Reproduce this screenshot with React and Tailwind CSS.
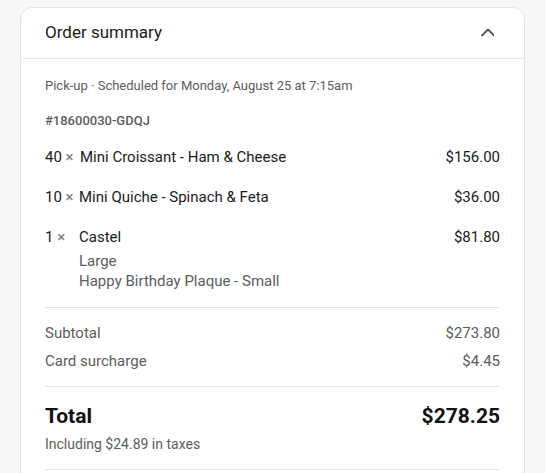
export default function App() {
  const gray = "text-[#5c5c5c]";
  return (
    <div className="min-h-[473px] w-[546px] bg-[#f7f7f7] pt-[7px] pl-[20px]" style={{ fontFamily: "Roboto, Inter, sans-serif" }}>
      <div className="w-[505px] rounded-t-[12px] border border-[#e3e3e3] bg-white pb-[40px]">
        <div className="flex h-[51px] items-center justify-between border-b border-[#e6e6e6] px-[24px]">
          <span className="text-[17px] text-[#1a1a1a]">Order summary</span>
          <svg width="14" height="14" viewBox="0 0 14 14" className="mr-[6px]">
            <path d="M2 9.5 L8 3.5 L14 9.5" fill="none" stroke="#555" strokeWidth="1.8" strokeLinecap="round" strokeLinejoin="round" />
          </svg>
        </div>
        <div className="px-[24px]">
          <div className={`mt-[17px] text-[13px] leading-[20px] ${gray}`}>Pick-up · Scheduled for Monday, August 25 at 7:15am</div>
          <div className={`mt-[15px] text-[13px] leading-[20px] font-medium ${gray}`}>#18600030-GDQJ</div>

          <div className="mt-[14px] flex justify-between text-[15px] leading-[24px] text-[#1a1a1a]">
            <div className="flex">
              <span className="w-[35px] shrink-0 whitespace-nowrap">40 <span className="text-[#777]">×</span></span>
              <span>Mini Croissant - Ham &amp; Cheese</span>
            </div>
            <span>$156.00</span>
          </div>
          <div className="mt-[16px] flex justify-between text-[15px] leading-[24px] text-[#1a1a1a]">
            <div className="flex">
              <span className="w-[34px] shrink-0 whitespace-nowrap">10 <span className="text-[#777]">×</span></span>
              <span>Mini Quiche - Spinach &amp; Feta</span>
            </div>
            <span>$36.00</span>
          </div>
          <div className="mt-[16px] flex justify-between text-[15px] leading-[24px] text-[#1a1a1a]">
            <div className="flex">
              <span className="w-[34px] shrink-0 whitespace-nowrap">1 <span className="text-[#777]">×</span></span>
              <div className="flex flex-col">
                <span>Castel</span>
                <span className={`mt-[2px] leading-[20px] ${gray}`}>Large</span>
                <span className={`leading-[20px] ${gray}`}>Happy Birthday Plaque - Small</span>
              </div>
            </div>
            <span>$81.80</span>
          </div>

          <div className="mt-[16px] border-t border-[#e3e3e3]" />
          <div className={`mt-[13px] flex justify-between text-[15px] leading-[24px] ${gray}`}>
            <span>Subtotal</span>
            <span>$273.80</span>
          </div>
          <div className={`mt-[4px] flex justify-between text-[15px] leading-[24px] ${gray}`}>
            <span>Card surcharge</span>
            <span>$4.45</span>
          </div>
          <div className="mt-[13px] border-t border-[#e3e3e3]" />
          <div className="mt-[15px] flex justify-between text-[21px] leading-[28px] font-bold text-[#111]">
            <span>Total</span>
            <span>$278.25</span>
          </div>
          <div className={`mt-[4px] text-[14px] leading-[20px] ${gray}`}>Including $24.89 in taxes</div>
          <div className="mt-[15px] border-t border-[#e3e3e3]" />
        </div>
      </div>
    </div>
  );
}
